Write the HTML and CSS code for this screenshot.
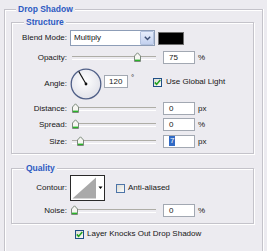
FILE: index.html
```html
<html>
	<head>
		<title>Drop Shadow</title>
		<link rel="stylesheet" href="styles.css">
	</head>
	<body>
		<fieldset class="group outer">
			<legend>Drop Shadow</legend>

			<fieldset class="group structure">
				<legend>Structure</legend>

				<div class="row r-blend">
					<span class="lbl">Blend Mode:</span>
					<div class="select">
						<span class="select-text">Multiply</span>
						<span class="drop">
							<svg width="7" height="5" viewBox="0 0 7 5"><path d="M0.8 0.8L3.5 3.6L6.2 0.8" fill="none" stroke="#3d4f73" stroke-width="1.4"/></svg>
						</span>
					</div>
					<span class="swatch"></span>
				</div>

				<div class="row r-opacity">
					<span class="lbl">Opacity:</span>
					<div class="slider">
						<span class="thumb" style="left:64px"><svg width="7" height="10" viewBox="0 0 7 10"><path d="M0.5 9.5V4L3.5 0.8L6.5 4V9.5Z" fill="#f6f6f2" stroke="#7d8a7d"/><path d="M1 8.3H6" stroke="#29b329" stroke-width="1.4"/></svg></span>
					</div>
					<span class="num">75</span>
					<span class="unit">%</span>
				</div>

				<div class="row r-angle">
					<span class="lbl">Angle:</span>
					<svg class="dial" width="32" height="32" viewBox="0 0 32 32">
						<defs>
							<radialGradient id="dialfill" cx="45%" cy="40%" r="65%">
								<stop offset="0" stop-color="#ffffff"/>
								<stop offset="1" stop-color="#dfe0e8"/>
							</radialGradient>
						</defs>
						<circle cx="16" cy="16" r="14.8" fill="url(#dialfill)" stroke="#4f5f87" stroke-width="1.3"/>
						<line x1="16" y1="16" x2="8.7" y2="3.4" stroke="#111" stroke-width="1.1"/>
						<circle cx="16" cy="16" r="1.4" fill="#111"/>
					</svg>
					<span class="num small">120</span>
					<span class="deg">°</span>
					<span class="check on"><svg width="7" height="7" viewBox="0 0 7 7"><path d="M0.8 3.4L2.6 5.4L6.3 1" fill="none" stroke="#22a222" stroke-width="1.6"/></svg></span>
					<span class="check-lbl">Use Global Light</span>
				</div>

				<div class="row r-distance">
					<span class="lbl">Distance:</span>
					<div class="slider">
						<span class="thumb" style="left:2px"><svg width="7" height="10" viewBox="0 0 7 10"><path d="M0.5 9.5V4L3.5 0.8L6.5 4V9.5Z" fill="#f6f6f2" stroke="#7d8a7d"/><path d="M1 8.3H6" stroke="#29b329" stroke-width="1.4"/></svg></span>
					</div>
					<span class="num">0</span>
					<span class="unit">px</span>
				</div>

				<div class="row r-spread">
					<span class="lbl">Spread:</span>
					<div class="slider">
						<span class="thumb" style="left:2px"><svg width="7" height="10" viewBox="0 0 7 10"><path d="M0.5 9.5V4L3.5 0.8L6.5 4V9.5Z" fill="#f6f6f2" stroke="#7d8a7d"/><path d="M1 8.3H6" stroke="#29b329" stroke-width="1.4"/></svg></span>
					</div>
					<span class="num">0</span>
					<span class="unit">%</span>
				</div>

				<div class="row r-size">
					<span class="lbl">Size:</span>
					<div class="slider">
						<span class="thumb" style="left:7px"><svg width="7" height="10" viewBox="0 0 7 10"><path d="M0.5 9.5V4L3.5 0.8L6.5 4V9.5Z" fill="#f6f6f2" stroke="#7d8a7d"/><path d="M1 8.3H6" stroke="#29b329" stroke-width="1.4"/></svg></span>
					</div>
					<span class="num"><span class="sel">7</span></span>
					<span class="unit">px</span>
				</div>
			</fieldset>

			<fieldset class="group quality">
				<legend>Quality</legend>

				<div class="row r-contour">
					<span class="lbl">Contour:</span>
					<svg class="contour" width="35" height="26" viewBox="0 0 35 26">
						<rect x="0.5" y="0.5" width="34" height="25" fill="#fff" stroke="#2a2a2a"/>
						<path d="M2.5 23.5L26 2.5V23.5Z" fill="#a9a9a9"/>
						<path d="M28.5 11.5H32.5L30.5 14Z" fill="#000"/>
					</svg>
					<span class="check aa"></span>
					<span class="check-lbl">Anti-aliased</span>
				</div>

				<div class="row r-noise">
					<span class="lbl">Noise:</span>
					<div class="slider">
						<span class="thumb" style="left:1px"><svg width="7" height="10" viewBox="0 0 7 10"><path d="M0.5 9.5V4L3.5 0.8L6.5 4V9.5Z" fill="#f6f6f2" stroke="#7d8a7d"/><path d="M1 8.3H6" stroke="#29b329" stroke-width="1.4"/></svg></span>
					</div>
					<span class="num">0</span>
					<span class="unit">%</span>
				</div>
			</fieldset>

			<div class="row r-knock">
				<span class="check on knock"><svg width="7" height="7" viewBox="0 0 7 7"><path d="M0.8 3.4L2.6 5.4L6.3 1" fill="none" stroke="#22a222" stroke-width="1.6"/></svg></span>
				<span class="check-lbl">Layer Knocks Out Drop Shadow</span>
			</div>
		</fieldset>
	</body>
</html>
```

FILE: styles.css
```css
* {
	box-sizing: border-box;
}
body {
	margin: 0;
	width: 267px;
	height: 251px;
	overflow: hidden;
	background-color: #ecebf0;
	font-family: "Liberation Sans", Arial, sans-serif;
	font-size: 8px;
	color: #161616;
}

/* etched group boxes */
.group {
	margin: 0;
	padding: 0;
	min-width: 0;
	border: 1px solid #c4c3ca;
	box-shadow: inset 1px 1px 0 #fff, 1px 1px 0 #fff;
}
.group > legend {
	padding: 0 2px;
	margin-left: 12px;
	font-size: 8.5px;
	font-weight: bold;
	line-height: 10px;
	color: #2c5ac2;
	background-color: #ecebf0;
}
.outer {
	width: 259px;
	height: 247px;
	margin: 4px 0 0 4px;
	padding: 3px 8px 0 6px;
	border-bottom: 0;
	box-shadow: inset 1px 1px 0 #fff, 1px 0 0 #fff;
}
.outer > legend {
	margin-left: 5px;
}
.structure {
	padding-bottom: 5px;
}
.quality {
	margin-top: 9px;
	padding-bottom: 6px;
}

/* rows */
.row {
	display: flex;
	align-items: center;
}
.lbl {
	width: 55px;
	margin-right: 3px;
	text-align: right;
	line-height: 10px;
	white-space: nowrap;
}
.r-blend {
	height: 16px;
	margin-top: 3px;
}
.r-opacity {
	height: 13px;
	margin-top: 5px;
}
.r-angle {
	height: 32px;
	margin-top: 4px;
	align-items: flex-start;
}
.r-angle .lbl {
	margin-top: 11px;
}
.r-distance {
	height: 13px;
	margin-top: 2px;
}
.r-spread {
	height: 13px;
	margin-top: 3px;
}
.r-size {
	height: 13px;
	margin-top: 4px;
}
.r-contour {
	height: 26px;
	margin-top: 2px;
}
.r-noise {
	height: 13px;
	margin-top: 3px;
}
.r-knock {
	height: 10px;
	margin-top: 5px;
}

/* blend mode dropdown */
.select {
	display: flex;
	align-items: center;
	width: 85px;
	height: 16px;
	background-color: #fff;
	border: 1px solid #8d9db7;
}
.select-text {
	flex: 1;
	padding-left: 3px;
	line-height: 10px;
}
.drop {
	display: flex;
	align-items: center;
	justify-content: center;
	width: 14px;
	height: 14px;
	border: 1px solid #b3c2de;
	border-radius: 1px;
	background: linear-gradient(#e6edfb, #c3d1ef);
}
.swatch {
	width: 26px;
	height: 13px;
	margin-left: 3px;
	background-color: #000;
	border: 1px solid #6e6e6e;
}

/* sliders */
.slider {
	position: relative;
	width: 86px;
	height: 13px;
}
.slider::before {
	content: "";
	position: absolute;
	left: 2px;
	right: 0;
	top: 5px;
	height: 2px;
	border-top: 1px solid #aeada6;
	border-bottom: 1px solid #fff;
}
.thumb {
	position: absolute;
	top: 1px;
	width: 7px;
	height: 10px;
	display: block;
}
.thumb svg {
	display: block;
}

/* number fields */
.num {
	width: 32px;
	height: 13px;
	margin-left: 7px;
	padding-left: 5px;
	background-color: #fff;
	border: 1px solid #a2a8b2;
	line-height: 11px;
}
.num.small {
	width: 24px;
	margin-left: 2px;
	margin-top: 7px;
	padding-left: 4px;
}
.sel {
	display: inline-block;
	padding: 0 1px;
	background-color: #316ac5;
	color: #fff;
	line-height: 10px;
}
.unit {
	margin-left: 3px;
	line-height: 10px;
}
.deg {
	width: 25px;
	padding-left: 3px;
	margin-top: 5px;
	line-height: 10px;
}

/* angle dial */
.dial {
	display: block;
}

/* checkboxes */
.check {
	display: flex;
	align-items: center;
	justify-content: center;
	width: 9px;
	height: 9px;
	border: 1px solid #1f4f86;
	background: linear-gradient(135deg, #dcdcd6, #fbfbf9);
}
.r-angle .check {
	margin-top: 10px;
}
.check-lbl {
	margin-left: 4px;
	line-height: 10px;
	white-space: nowrap;
}
.r-angle .check-lbl {
	margin-top: 9px;
}
.contour {
	display: block;
}
.check.aa {
	margin-left: 11px;
	border-color: #4d74a8;
}
.r-contour .check-lbl {
	margin-left: 3px;
}
.check.knock {
	margin-left: 64px;
}
.r-knock .check-lbl {
	margin-left: 3px;
}
```
